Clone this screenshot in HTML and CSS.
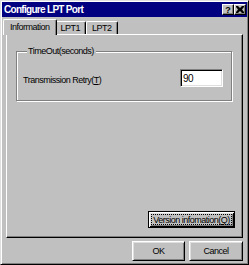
FILE: index.html
```html
<!DOCTYPE html>
<html lang="en">
<head>
  <meta charset="UTF-8" />
  <title>Configure LPT Port</title>
  <link rel="stylesheet" href="styles.css">
</head>
<body>
  <div class="window">
    <div class="titlebar">
      <span class="title">Configure LPT Port</span>
      <div class="caption-buttons">
        <button class="caption-btn help">?</button>
        <button class="caption-btn close">
          <svg width="8" height="7" viewBox="0 0 8 7"><path d="M0 0h2l2 2 2-2h2v1L6 3.5 8 6v1H6L4 5 2 7H0V6l2-2.5L0 1z" fill="#000"/></svg>
        </button>
      </div>
    </div>

    <div class="tabs">
      <div class="tab active">Information</div>
      <div class="tab">LPT1</div>
      <div class="tab">LPT2</div>
    </div>

    <div class="panel">
      <fieldset class="group">
        <legend>TimeOut(seconds)</legend>
        <div class="row">
          <label for="retry">Transmission Retry(<u>T</u>)</label>
          <input type="text" id="retry" value="90" />
        </div>
      </fieldset>
      <div class="panel-footer">
        <button class="btn default"><span class="focus">Version infomation(<u>Q</u>)</span></button>
      </div>
    </div>

    <div class="actions">
      <button class="btn ok">OK</button>
      <button class="btn cancel">Cancel</button>
    </div>
  </div>
</body>
</html>
```

FILE: styles.css
```css
* { box-sizing: border-box; }
body { margin: 0; background: #c0c0c0; font-family: "Liberation Sans", Arial, sans-serif; font-size: 9px; letter-spacing: -0.5px; color: #000; }

.window { width: 249px; height: 265px; padding: 1px; display: flex; flex-direction: column; background: #c0c0c0; border: 1px solid; border-color: #dfdfdf #000 #000 #dfdfdf; box-shadow: inset 1px 1px #fff, inset -1px -1px #808080; }

.titlebar { height: 15px; flex: none; display: flex; align-items: center; justify-content: space-between; padding: 0 1px 0 2px; background: #000080; color: #fff; }
.title { font-weight: bold; font-size: 10px; letter-spacing: -0.7px; }
.caption-buttons { display: flex; }
.caption-btn { width: 12px; height: 11px; padding: 0; display: flex; align-items: center; justify-content: center; font: bold 9px "Liberation Sans", sans-serif; color: #000; background: #c0c0c0; border: 1px solid; border-color: #fff #000 #000 #fff; box-shadow: inset -1px -1px #808080; }

.tabs { height: 15px; margin-top: 2px; padding-left: 3px; display: flex; align-items: flex-end; flex: none; }
.tab { height: 13px; padding: 0 5px; line-height: 12px; background: #c0c0c0; border: 1px solid; border-bottom: none; border-color: #fff #000 #000 #fff; border-radius: 2px 2px 0 0; box-shadow: inset -1px 0 #808080; }
.tab.active { position: relative; z-index: 1; height: 16px; margin: 0 -2px -1px -2px; padding: 0 6px; line-height: 14px; }

.panel { flex: 1; margin: 0 4px; padding: 11px 7px 9px 9px; display: flex; flex-direction: column; border: 1px solid; border-color: #fff #000 #000 #fff; box-shadow: inset -1px -1px #808080; }

.group { margin: 0 3px 0 0; padding: 12px 8px 13px 6px; border: 1px solid #808080; box-shadow: inset 1px 1px #fff, 1px 1px #fff; }
.group legend { margin-left: 4px; padding: 0 2px 0 1px; background: #c0c0c0; line-height: 11px; }
.row { display: flex; align-items: center; justify-content: space-between; }
.row label { padding-top: 3px; }
.row input { width: 43px; height: 18px; padding: 0 2px; font: inherit; font-size: 10px; letter-spacing: inherit; background: #fff; border: 1px solid; border-color: #808080 #fff #fff #808080; box-shadow: inset 1px 1px #000, inset -1px -1px #dfdfdf; outline: none; }

.panel-footer { margin-top: auto; display: flex; justify-content: flex-end; }

.btn { padding: 0; font: inherit; letter-spacing: inherit; color: #000; white-space: nowrap; background: #c0c0c0; border: 1px solid; border-color: #fff #000 #000 #fff; box-shadow: inset 1px 1px #dfdfdf, inset -1px -1px #808080; }
.btn.default { width: 87px; height: 17px; padding: 2px; border-color: #000; box-shadow: inset 1px 1px #fff, inset -1px -1px #000, inset 2px 2px #dfdfdf, inset -2px -2px #808080; }
.focus { display: block; height: 100%; line-height: 10px; border: 1px dotted #000; }

.actions { height: 20px; margin: 3px 0 2px; padding-right: 4px; display: flex; justify-content: flex-end; gap: 4px; flex: none; }
.btn.ok { width: 53px; }
.btn.cancel { width: 54px; }
```
